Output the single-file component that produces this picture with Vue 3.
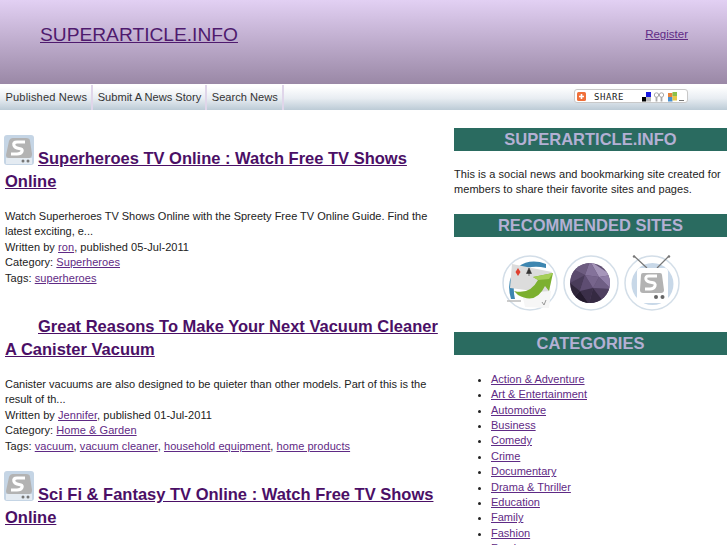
<script setup>
const posts = [
  { id: 1, icon: true, title: 'Superheroes TV Online : Watch Free TV Shows Online', text: 'Watch Superheroes TV Shows Online with the Spreety Free TV Online Guide. Find the latest exciting, e...', author: 'ron', date: '05-Jul-2011', category: 'Superheroes', tags: ['superheroes'] },
  { id: 2, icon: false, title: 'Great Reasons To Make Your Next Vacuum Cleaner A Canister Vacuum', text: 'Canister vacuums are also designed to be quieter than other models. Part of this is the result of th...', author: 'Jennifer', date: '01-Jul-2011', category: 'Home & Garden', tags: ['vacuum', 'vacuum cleaner', 'household equipment', 'home products'] },
  { id: 3, icon: true, title: 'Sci Fi & Fantasy TV Online : Watch Free TV Shows Online', text: '', author: '', date: '', category: '', tags: [] },
]
const cats = ['Action & Adventure', 'Art & Entertainment', 'Automotive', 'Business', 'Comedy', 'Crime', 'Documentary', 'Drama & Thriller', 'Education', 'Family', 'Fashion', 'Food']
const navs = ['Published News', 'Submit A News Story', 'Search News']
</script>

<template>
  <div class="page">
    <header class="head">
      <a class="brand" href="#">SUPERARTICLE.INFO</a>
      <a class="reg" href="#">Register</a>
    </header>
    <nav class="nav">
      <a v-for="n in navs" :key="n" class="tab" href="#">{{ n }}</a>
      <div class="share">
        <svg class="plus" width="9" height="9" viewBox="0 0 9 9"><rect width="9" height="9" rx="1.500" fill="#f0703a"/><path d="M4.500 2v5M2 4.500h5" stroke="#fff" stroke-width="1.600"/></svg>
        <span class="sharetxt">SHARE</span>
        <svg class="sicons" width="44" height="10" viewBox="0 0 44 10">
          <rect x="5" y="0" width="5" height="5" fill="#1a1ae0"/><rect x="1" y="5" width="4" height="4.500" fill="#000"/><rect x="5" y="5" width="5" height="4.500" fill="#bbb"/>
          <circle cx="15.500" cy="3" r="2.200" fill="none" stroke="#aaa"/><circle cx="20.500" cy="3" r="2.200" fill="none" stroke="#aaa"/><path d="M15.500 5v4.500M20.500 5v4.500" stroke="#aaa" stroke-width="1.800"/>
          <rect x="27" y="1" width="4.500" height="4" fill="#e8843a"/><rect x="31.500" y="0" width="4.500" height="4" fill="#8ac04a"/><rect x="27" y="5" width="4.500" height="4.500" fill="#4a90d0"/><rect x="31.500" y="4" width="4.500" height="4.500" fill="#e8c84a"/>
          <path d="M38 8.500h5" stroke="#777"/>
        </svg>
      </div>
    </nav>
    <div class="cols">
      <main class="main">
        <article v-for="p in posts" :key="p.id" class="post">
          <h2 class="ttl">
            <span class="iconbox">
              <svg v-if="p.icon" width="30" height="30" viewBox="0 0 30 30"><rect width="30" height="30" rx="3" fill="#c5d5e5"/><path d="M5 6 Q6 3 9 3 H22 Q26 3 26 6 L28 19 Q28 23 25 23 H5 Q2 23 2 20 Z" fill="#b3b3b3"/><path d="M21 7 H13 Q9 7 10 10.500 Q11 13 15 13.500 Q19 14 18 16.500 Q17 19 13 19 H7" fill="none" stroke="#fff" stroke-width="3.200"/><rect x="2" y="23" width="26" height="6" fill="#e4ebf2"/><circle cx="19" cy="26" r="1.500" fill="#777"/><circle cx="24" cy="26" r="1.500" fill="#777"/></svg>
            </span>
            <a href="#">{{ p.title }}</a>
          </h2>
          <p v-if="p.text" class="meta">
            {{ p.text }}<br>
            <span class="wide">Written by <a href="#">{{ p.author }}</a>, published {{ p.date }}<br>
            Category: <a href="#">{{ p.category }}</a><br>
            Tags: <template v-for="(t, i) in p.tags" :key="t"><a href="#">{{ t }}</a><span v-if="i < p.tags.length - 1">, </span></template></span>
          </p>
        </article>
      </main>
      <aside class="side">
        <h3 class="bar">SUPERARTICLE.INFO</h3>
        <p class="about">This is a social news and bookmarking site created for members to share their favorite sites and pages.</p>
        <h3 class="bar">RECOMMENDED SITES</h3>
        <div class="rec">
          <svg width="56" height="56" viewBox="0 0 56 56">
            <circle cx="28" cy="28" r="27" fill="#fff" stroke="#d3dee8" stroke-width="1.500"/>
            <path d="M9 44 Q3 24 16 12 Q28 3 44 9 L44 13 Q28 9 18 17 Q9 27 13 44 Z" fill="#3d86b0"/>
            <path d="M10 9 L50 17 L47 38 L8 33 Z" fill="#dcdcdc"/>
            <path d="M16 13l2.500 4-2.500 4-2.500-4z" fill="#e0402f"/>
            <path d="M27 13l2.500 5.500h-5zM27 18v3" fill="#333" stroke="#333" stroke-width=".6"/>
            <path d="M20 38 L49 36 L47 53 L23 52 Z" fill="#f6f6f6"/>
            <path d="M12 36 Q28 40 36 25 L31 22 L51 18 L47 36 L43 31 Q34 50 16 40 Z" fill="#7cb030"/>
            <path d="M36 25 L31 22 L51 18 L47 24 Z" fill="#a6cf58"/>
            <path d="M40 47l2 3 2-5" fill="none" stroke="#999"/>
            <path d="M5 46 H19" stroke="#bbb" stroke-width="1.500"/>
          </svg>
          <svg width="56" height="56" viewBox="0 0 56 56">
            <defs><clipPath id="ball"><circle cx="27" cy="28" r="20"/></clipPath></defs>
            <circle cx="28" cy="28" r="27" fill="#fff" stroke="#d3dee8" stroke-width="1.500"/>
            <g clip-path="url(#ball)">
              <rect x="6" y="7" width="42" height="42" fill="#5e4d70"/>
              <path d="M27 6 L48 20 L36 22 Z" fill="#a696ba"/>
              <path d="M36 22 L48 20 L48 34 Z" fill="#8f7da6"/>
              <path d="M27 6 L36 22 L22 20 Z" fill="#84729a"/>
              <path d="M27 6 L22 20 L10 14 Z" fill="#6d5c80"/>
              <path d="M22 20 L36 22 L30 33 Z" fill="#77658c"/>
              <path d="M10 14 L22 20 L7 28 Z" fill="#5a4a6c"/>
              <path d="M7 28 L22 20 L17 36 Z" fill="#4a3c5a"/>
              <path d="M22 20 L30 33 L17 36 Z" fill="#5e4d72"/>
              <path d="M36 22 L48 34 L30 33 Z" fill="#6f5e84"/>
              <path d="M7 28 L17 36 L10 44 Z" fill="#2f2539"/>
              <path d="M17 36 L30 33 L26 49 Z" fill="#3b2f49"/>
              <path d="M30 33 L48 34 L40 46 Z" fill="#4f4060"/>
              <path d="M30 33 L40 46 L26 49 Z" fill="#352a42"/>
              <path d="M10 44 L17 36 L26 49 Z" fill="#241b2d"/>
            </g>
          </svg>
          <svg width="56" height="56" viewBox="0 0 56 56">
            <circle cx="28" cy="28" r="27" fill="#fff" stroke="#d3dee8" stroke-width="1.500"/>
            <circle cx="28.500" cy="29" r="21" fill="#c8d8e8"/>
            <path d="M10 1 L23 13 M45 1 L33 13" stroke="#777" stroke-width="1.200"/>
            <circle cx="10" cy="1.500" r="1.200" fill="#777"/><circle cx="45" cy="1.500" r="1.200" fill="#777"/>
            <rect x="13" y="13" width="31" height="35" rx="4" fill="#fff"/>
            <path d="M19 18 H36 Q38 18 38 20 L40 35 Q40 38 37 38 H19 Q16 38 16 35 L17 20 Q17 18 19 18Z" fill="#b3b3b3"/>
            <path d="M33 21 H25 Q21 21 22 24.500 Q23 27 28 27.500 Q32 28 31 31 Q30 34 26 34 H21" fill="none" stroke="#fff" stroke-width="3"/>
            <circle cx="32" cy="42" r="2" fill="#666"/><circle cx="38.500" cy="42" r="2" fill="#666"/>
          </svg>
        </div>
        <h3 class="bar">CATEGORIES</h3>
        <ul class="cats">
          <li v-for="c in cats" :key="c"><a href="#">{{ c }}</a></li>
        </ul>
      </aside>
    </div>
  </div>
</template>

<style scoped>
.page { width: 727px; height: 545px; overflow: hidden; background: #fff; font-family: "Liberation Sans", Arial, sans-serif; color: #222; font-size: 11px; line-height: 15.4px; }
a { color: #5f2a85; }
.head { height: 84px; background: linear-gradient(#e2d0f3, #9a88a6); display: flex; justify-content: space-between; box-sizing: border-box; padding: 23px 39px 0 40px; }
.brand { font-size: 19.2px; line-height: 24px; height: 24px; color: #4f1a6e; }
.reg { font-size: 11.5px; line-height: 15px; margin-top: 4px; }
.nav { height: 26px; background: linear-gradient(#fff 10%, #e8edf2 55%, #bccbd6); display: flex; align-items: stretch; position: relative; padding: 1px 0 0 1px; box-sizing: border-box; }
.tab { color: #333; text-decoration: none; padding: 0 4px 0 4.5px; line-height: 24px; border-right: 2px solid #e0d6ea; font-size: 11.1px; }
.tab:first-child { letter-spacing: 0.15px; }
.tab:nth-child(3) { padding-right: 4px; }
.share { position: absolute; left: 574px; top: 5px; width: 112px; height: 12px; border: 1px solid #c8c8c8; border-radius: 3px; background: #fff; display: flex; align-items: center; }
.plus { margin-left: 2px; }
.sharetxt { font-family: "DejaVu Sans Mono", monospace; font-size: 9px; line-height: 12px; margin: 1px 0 0 8px; color: #222; letter-spacing: 0.6px; }
.sicons { margin: 1px 2px 0 auto; }
.cols { display: flex; }
.main { width: 454px; flex: none; box-sizing: border-box; padding: 25px 13px 0 5px; }
.post { height: 168px; }
.ttl { margin: 0; font-size: 16.5px; line-height: 23px; font-weight: bold; }
.ttl a { color: #4b0f66; }
.iconbox { display: inline-block; width: 30px; height: 30px; margin: 0 4px 0 -1px; vertical-align: -1px; }
.iconbox svg { display: block; }
.meta { margin: 16px 0 0; }
.wide { letter-spacing: 0.06px; }
.side { width: 273px; flex: none; padding-top: 18px; }
.bar { margin: 0; height: 23px; line-height: 23px; background: #2a6b60; color: #b4b0d4; text-align: center; font-size: 16.5px; font-weight: bold; }
.about { margin: 15.500px 0 16.500px; letter-spacing: 0.05px; }
.rec { display: flex; justify-content: center; gap: 5px; margin: 18px 0 21px; }
.rec svg { display: block; overflow: visible; }
.cats { margin: 17px 0 0; padding: 0 0 0 37px; }
</style>

<style>
html, body { margin: 0; overflow: hidden; }
</style>
